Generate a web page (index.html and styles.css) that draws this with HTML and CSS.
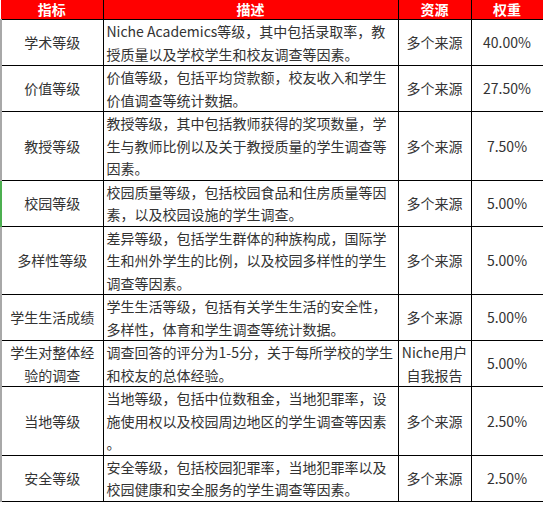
FILE: index.html
```html
<!DOCTYPE html>
<html lang="zh">
<head>
<meta charset="utf-8">
<link rel="stylesheet" href="styles.css">
</head>
<body>
<table class="rank">
  <colgroup>
    <col class="c1"><col class="c2"><col class="c3"><col class="c4">
  </colgroup>
  <thead>
    <tr><th>指标</th><th>描述</th><th>资源</th><th>权重</th></tr>
  </thead>
  <tbody>
    <tr><td class="name">学术等级</td><td class="desc">Niche Academics等级，其中包括录取率，教<br>授质量以及学校学生和校友调查等因素。</td><td class="src">多个来源</td><td class="w">40.00%</td></tr>
    <tr><td class="name">价值等级</td><td class="desc">价值等级，包括平均贷款额，校友收入和学生<br>价值调查等统计数据。</td><td class="src">多个来源</td><td class="w">27.50%</td></tr>
    <tr><td class="name">教授等级</td><td class="desc">教授等级，其中包括教师获得的奖项数量，学<br>生与教师比例以及关于教授质量的学生调查等<br>因素。</td><td class="src">多个来源</td><td class="w">7.50%</td></tr>
    <tr class="sel"><td class="name">校园等级</td><td class="desc">校园质量等级，包括校园食品和住房质量等因<br>素，以及校园设施的学生调查。</td><td class="src">多个来源</td><td class="w">5.00%</td></tr>
    <tr><td class="name">多样性等级</td><td class="desc">差异等级，包括学生群体的种族构成，国际学<br>生和州外学生的比例，以及校园多样性的学生<br>调查等因素。</td><td class="src">多个来源</td><td class="w">5.00%</td></tr>
    <tr><td class="name">学生生活成绩</td><td class="desc">学生生活等级，包括有关学生生活的安全性，<br>多样性，体育和学生调查等统计数据。</td><td class="src">多个来源</td><td class="w">5.00%</td></tr>
    <tr><td class="name">学生对整体经<br>验的调查</td><td class="desc">调查回答的评分为1-5分，关于每所学校的学生<br>和校友的总体经验。</td><td class="src">Niche用户<br>自我报告</td><td class="w">5.00%</td></tr>
    <tr><td class="name">当地等级</td><td class="desc">当地等级，包括中位数租金，当地犯罪率，设<br>施使用权以及校园周边地区的学生调查等因素<br>。</td><td class="src">多个来源</td><td class="w">2.50%</td></tr>
    <tr><td class="name">安全等级</td><td class="desc">安全等级，包括校园犯罪率，当地犯罪率以及<br>校园健康和安全服务的学生调查等因素。</td><td class="src">多个来源</td><td class="w">2.50%</td></tr>
  </tbody>
</table>
</body>
</html>
```

FILE: styles.css
```css
html, body {
  margin: 0;
  padding: 0;
  background: #ffffff;
}
body {
  font-family: "Noto Sans CJK SC", "Noto Sans", sans-serif;
  font-size: 14px;
  color: #333333;
}
.rank {
  border-collapse: collapse;
  table-layout: fixed;
  width: 542px;
}
.c1 { width: 102px; }
.c2 { width: 295px; }
.c3 { width: 73px; }
.c4 { width: 72px; }
.rank th {
  background: #ff0000;
  color: #ffffff;
  font-weight: bold;
  font-size: 14px;
  line-height: 19px;
  height: 19px;
  padding: 0;
  text-align: center;
  border: 1px solid #000000;
  border-top: none;
  border-left: none;
}
.rank td {
  border: 1px solid #000000;
  padding: 0;
  line-height: 22.5px;
  vertical-align: middle;
  white-space: nowrap;
  overflow: hidden;
}
.rank td.name {
  text-align: center;
  border-left: 2px solid #a8a8a8;
}
.rank tr.sel td.name {
  border-left: 2px solid #4caf50;
}
.rank td.desc {
  text-align: left;
  padding-left: 3px;
}
.rank td.src,
.rank td.w {
  text-align: center;
}
```
